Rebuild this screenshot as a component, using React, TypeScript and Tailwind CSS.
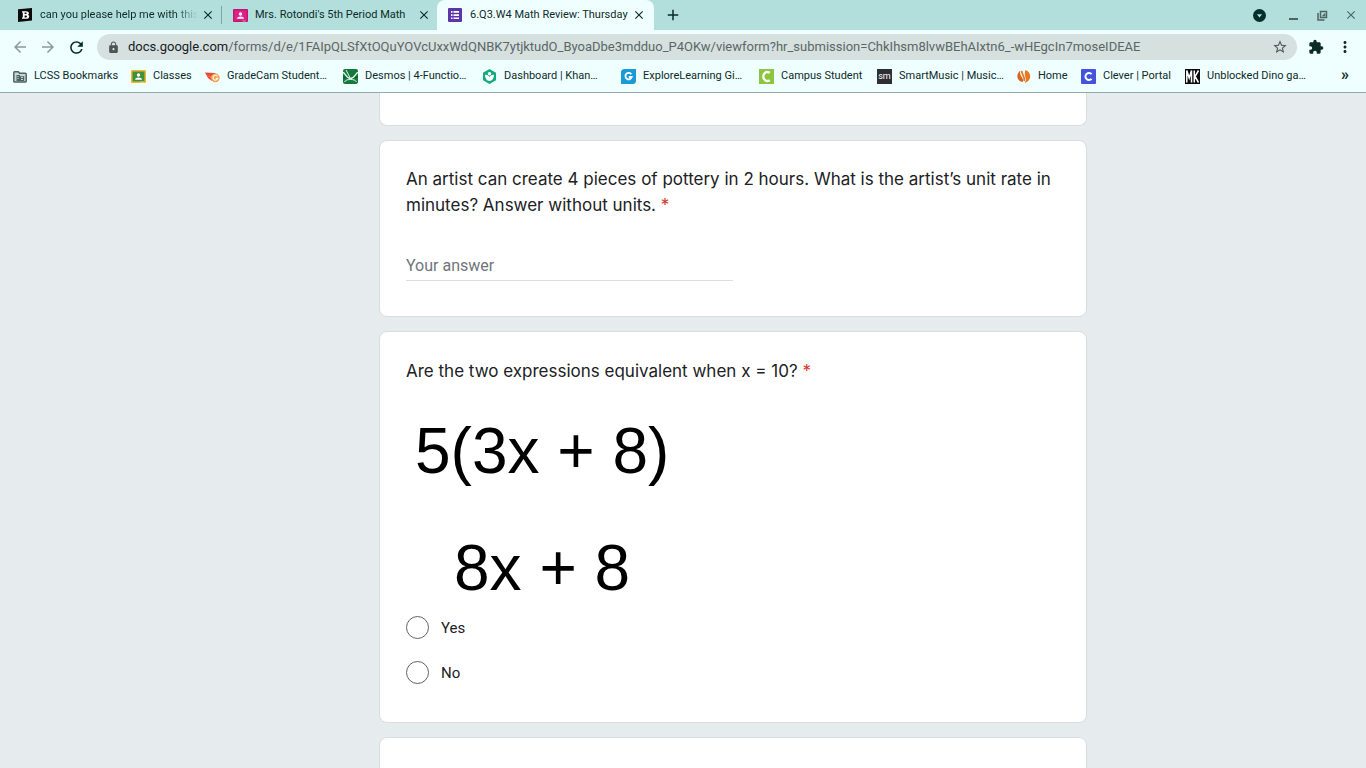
import React, { useState } from 'react';
import {
  MdAdd,
  MdArrowBack,
  MdArrowForward,
  MdClose,
  MdExtension,
  MdLock,
  MdMoreVert,
  MdRefresh,
  MdStarBorder,
} from 'react-icons/md';

interface Tab {
  title: string;
  icon: React.ReactNode;
  active?: boolean;
  divider?: boolean;
}

interface Bookmark {
  label: string;
  icon: React.ReactNode;
  width: string;
}

const BrainlyIcon = () => (
  <svg viewBox="0 0 14 14" className="h-[14px] w-[14px]">
    <path d="M0 1.2 14 0v12.6L0 14z" fill="#0a0a0a" />
    <path d="M4 3.2h4c2 0 2.9.8 2.9 2 0 .8-.4 1.3-1 1.6.9.3 1.3.9 1.3 1.7 0 1.4-1.1 2.3-3 2.3H4V9.5h.8v-5H4zm2.6 1.4v1.5H8c.9 0 .9-1.5 0-1.5zm0 2.8v2h1.5c1.1 0 1.1-2 0-2z" fill="#fff" />
  </svg>
);

const ClassroomIcon = ({ frame, board }: { frame: string; board: string }) => (
  <svg viewBox="0 0 15 13" className="h-[13px] w-[15px] shrink-0">
    <rect width="15" height="13" rx="1" fill={frame} />
    <rect x="1.5" y="1.5" width="12" height="10" fill={board} />
    <circle cx="7.5" cy="5" r="1.7" fill="#fff" />
    <path d="M4 9.8c0-1.6 2-2.3 3.5-2.3s3.5.7 3.5 2.3z" fill="#fff" />
    <path d="M9.5 11.5h3.3v1H9.5z" fill="#fff" opacity=".5" />
  </svg>
);

const FormsIcon = () => (
  <svg viewBox="0 0 14 14" className="h-[14px] w-[14px]">
    <rect width="14" height="14" rx="1" fill="#5e35a8" />
    <path d="M3 3h1.5v1.7H3zM3 6.2h1.5v1.7H3zM3 9.4h1.5v1.7H3zM5.5 3H11v1.7H5.5zM5.5 6.2H11v1.7H5.5zM5.5 9.4H11v1.7H5.5z" fill="#fff" />
  </svg>
);

const ManagedFolderIcon = () => (
  <svg viewBox="0 0 14 12" className="h-[12px] w-[14px]">
    <path d="M1.7.8h3.6l1.3 1.5h5.7c.5 0 .9.4.9.9v7c0 .5-.4.9-.9.9H1.7c-.5 0-.9-.4-.9-.9V1.7c0-.5.4-.9.9-.9z" fill="#c9d6d5" stroke="#4d6362" strokeWidth="1.5" />
    <path d="M3.5 4H7v1.2h4.2V10H3.5z" fill="#4d6362" />
    <path d="M4.5 5h.9v.9h-.9zM4.5 7h.9v.9h-.9zM8 6.2h2V7H8zM8 8.2h2V9H8z" fill="#efffff" />
  </svg>
);

const GradeCamIcon = () => (
  <svg viewBox="0 0 15 12" className="h-[12px] w-[15px]">
    <path d="M0 1.5 10 2l3 2.5L7 10 3 7z" fill="#e8483c" />
    <path d="M2 4.5 8 5v4z" fill="#f0703a" />
    <circle cx="10.3" cy="6.8" r="4.4" fill="#f2a052" />
    <path d="M12.5 5.4A2.4 2.4 0 1 0 12.7 7.4h-2" fill="none" stroke="#fff7e6" strokeWidth="1.2" />
  </svg>
);

const DesmosIcon = () => (
  <svg viewBox="0 0 15 15" className="h-[15px] w-[15px]">
    <rect width="15" height="15" rx="2" fill="#127a3d" />
    <path d="M0 8c3 0 4 1 7.5 1S12 8 15 8" fill="none" stroke="#0b5529" strokeWidth="1.2" />
    <path d="M0 3.5c2.500.5 3.500 6 7.500 6s5-5.500 7.500-6" fill="none" stroke="#e6f5ea" strokeWidth="1.3" />
    <path d="m3 1 4.500 8.500M1.500 13c1-2 3-2.500 6-2.500s5 .5 6 2.500" fill="none" stroke="#e6f5ea" />
  </svg>
);

const KhanIcon = () => (
  <svg viewBox="0 0 15 15" className="h-[15px] w-[15px]">
    <path d="M7.5 0 14 3.7v7.6L7.5 15 1 11.3V3.7z" fill="#14a97e" />
    <path d="M3 5.8c2.6 0 4.5 1.2 4.5 2.7 0-1.5 1.9-2.7 4.5-2.7 0 3.7-1.9 6.2-4.5 6.2S3 9.5 3 5.8z" fill="#fff" />
    <circle cx="7.5" cy="4.7" r="1.8" fill="#fff" />
  </svg>
);

const GizmosIcon = () => (
  <svg viewBox="0 0 15 15" className="h-[15px] w-[15px]">
    <path d="M3.5 0H15v11.5a3.5 3.5 0 0 1-3.5 3.5H0V3.5A3.5 3.5 0 0 1 3.5 0z" fill="#1a9bd7" />
    <path d="M10.3 5.3A3.2 3.2 0 1 0 10.7 8H7.8" fill="none" stroke="#fff" strokeWidth="1.8" />
  </svg>
);

const CampusIcon = () => (
  <svg viewBox="0 0 15 15" className="h-[15px] w-[15px]">
    <rect width="15" height="15" fill="#8cc63f" />
    <path d="M10.8 3.8C7.5 1.8 4.3 3.8 4.3 7.5s3.2 5.7 6.5 3.7" fill="none" stroke="#fff" strokeWidth="2.3" />
  </svg>
);

const SmartMusicIcon = () => (
  <span className="flex h-[15px] w-[15px] items-center justify-center bg-[#2e2e33] text-[9px] leading-none text-white">
    sm
  </span>
);

const HomeFlameIcon = () => (
  <svg viewBox="0 0 15 15" className="h-[15px] w-[15px]">
    <path d="M4.5 1.5C1 4 .2 8.5 3.2 11.5c1.3 1.3 2.8 1.5 3.8 1.2C8.5 9 2.5 7 4.5 1.5z" fill="#d9651c" />
    <path d="M6 2c-1 3.5 3.5 5.5 2.3 10" fill="none" stroke="#e07a2a" strokeWidth="1.8" />
    <path d="M9.5 1c4.5 1.5 6 6.5 3.5 10-1 1.5-2.5 2.5-4.5 2.7C12 10 7 7 9.5 1z" fill="#e8781e" />
  </svg>
);

const CleverIcon = () => (
  <svg viewBox="0 0 15 15" className="h-[15px] w-[15px]">
    <rect width="15" height="15" rx="1" fill="#4353dd" />
    <path d="M10.6 5.2A3.5 3.5 0 1 0 10.6 9.8" fill="none" stroke="#fff" strokeWidth="2" />
  </svg>
);

const DinoIcon = () => (
  <svg viewBox="0 0 15 15" className="h-[15px] w-[15px]">
    <rect width="15" height="15" fill="#0a0a0a" />
    <path d="M1.8 13.5v-12L4.2 9l2.3-7.5v12M9.3 1.5v12M13.5 1.5l-3.5 6 3.5 6" fill="none" stroke="#fff" strokeWidth="1.5" />
  </svg>
);

const tabs: Tab[] = [
  { title: 'can you please help me with this', icon: <BrainlyIcon />, divider: true },
  { title: "Mrs. Rotondi's 5th Period Math", icon: <ClassroomIcon frame="#c2186b" board="#e0208a" /> },
  { title: '6.Q3.W4 Math Review: Thursday', icon: <FormsIcon />, active: true },
];

const bookmarks: Bookmark[] = [
  { label: 'LCSS Bookmarks', icon: <ManagedFolderIcon />, width: 'w-[119px]' },
  { label: 'Classes', icon: <ClassroomIcon frame="#f0b92b" board="#3f9142" />, width: 'w-[74px]' },
  { label: 'GradeCam Student…', icon: <GradeCamIcon />, width: 'w-[138px]' },
  { label: 'Desmos | 4-Functio…', icon: <DesmosIcon />, width: 'w-[139px]' },
  { label: 'Dashboard | Khan…', icon: <KhanIcon />, width: 'w-[139px]' },
  { label: 'ExploreLearning Gi…', icon: <GizmosIcon />, width: 'w-[138px]' },
  { label: 'Campus Student', icon: <CampusIcon />, width: 'w-[118px]' },
  { label: 'SmartMusic | Music…', icon: <SmartMusicIcon />, width: 'w-[139px]' },
  { label: 'Home', icon: <HomeFlameIcon />, width: 'w-[65px]' },
  { label: 'Clever | Portal', icon: <CleverIcon />, width: 'w-[104px]' },
  { label: 'Unblocked Dino ga…', icon: <DinoIcon />, width: 'w-[139px]' },
];

const TabStrip = () => (
  <div className="flex h-[30px] shrink-0 items-stretch bg-[#b2dfdb] pl-[7px]">
    {tabs.map((tab) => (
      <div
        key={tab.title}
        className={`flex items-center pl-[11px] ${
          tab.active ? 'w-[217px] rounded-t-lg bg-[#efffff] pr-2' : 'w-[215px] pr-[6px]'
        }`}
      >
        <span className="flex w-[14px] justify-center">{tab.icon}</span>
        <button
          type="button"
          className={`ml-2 min-w-0 flex-1 overflow-hidden whitespace-nowrap text-left text-[11px] ${
            tab.divider ? 'mask-r-from-85%' : ''
          }`}
        >
          {tab.title}
        </button>
        <button type="button" aria-label="Close tab" className="ml-[3px] shrink-0">
          <MdClose className="h-[14px] w-[14px]" />
        </button>
        {tab.divider && <span className="-mr-[6px] ml-[6px] h-[18px] w-px bg-[#7fa5a2]" />}
      </div>
    ))}
    <button type="button" aria-label="New tab" className="ml-[10px] self-center">
      <MdAdd className="h-[18px] w-[18px]" />
    </button>
    <div className="ml-auto flex items-center gap-[15px] pr-2 text-[#4d6663]">
      <button type="button" aria-label="Search tabs" className="mr-[5px]">
        <svg viewBox="0 0 12 12" className="h-[13px] w-[13px]">
          <circle cx="6" cy="6" r="6" fill="#04302c" />
          <path d="M3.6 4.8h4.8L6 7.8z" fill="#b2dfdb" />
        </svg>
      </button>
      <button type="button" aria-label="Minimize">
        <svg viewBox="0 0 14 14" className="h-[14px] w-[14px]">
          <path d="M3 10h9v2H3z" fill="currentColor" />
        </svg>
      </button>
      <button type="button" aria-label="Restore">
        <svg viewBox="0 0 14 14" className="h-[14px] w-[14px]" fill="none" stroke="currentColor" strokeWidth="1.5">
          <path d="M5.5 3.5h6v6h-6zM3 5v7h6.5M9.5 5.5v2h-2" />
        </svg>
      </button>
      <button type="button" aria-label="Close window">
        <MdClose className="h-[14px] w-[14px]" />
      </button>
    </div>
  </div>
);

const Toolbar = () => (
  <div className="flex h-[34px] shrink-0 items-center pl-[11px] pr-3">
    <div className="flex items-center gap-[10px] text-[#8a9b9a]">
      <button type="button" aria-label="Back">
        <MdArrowBack className="h-[18px] w-[18px]" />
      </button>
      <button type="button" aria-label="Forward">
        <MdArrowForward className="h-[18px] w-[18px]" />
      </button>
      <button type="button" aria-label="Reload" className="text-[#04302c]">
        <MdRefresh className="h-[19px] w-[19px]" />
      </button>
    </div>
    <div className="ml-[11px] flex h-[26px] min-w-0 flex-1 items-center rounded-full bg-[#d5e0df] pl-[10px] pr-[9px]">
      <MdLock className="h-[13px] w-[13px] shrink-0 text-[#4a5655]" />
      <div className="ml-2 min-w-0 flex-1 overflow-hidden whitespace-nowrap text-[13px] text-[#5b6766]">
        <span className="text-[#16211f]">docs.google.com</span>
        /forms/d/e/1FAIpQLSfXtOQuYOVcUxxWdQNBK7ytjktudO_ByoaDbe3mdduo_P4OKw/viewform?hr_submission=ChkIhsm8lvwBEhAIxtn6_-wHEgcIn7moseIDEAE
      </div>
      <button type="button" aria-label="Bookmark this page" className="text-[#4a5655]">
        <MdStarBorder className="h-4 w-4" />
      </button>
    </div>
    <button type="button" aria-label="Extensions" className="ml-[11px]">
      <MdExtension className="h-4 w-4" />
    </button>
    <button type="button" aria-label="Menu" className="ml-3">
      <MdMoreVert className="h-[18px] w-[18px]" />
    </button>
  </div>
);

const BookmarksBar = () => (
  <nav className="flex h-[29px] shrink-0 items-center border-b border-[#93a9ac] pb-[3px] pl-3 pr-[17px] text-[11px]">
    {bookmarks.map((bookmark) => (
      <a key={bookmark.label} href="#" className={`flex shrink-0 items-center gap-[7px] whitespace-nowrap ${bookmark.width}`}>
        <span className="flex w-[15px] shrink-0 justify-center">{bookmark.icon}</span>
        {bookmark.label}
      </a>
    ))}
    <button type="button" aria-label="More bookmarks" className="ml-auto pb-1 text-[16px] font-bold leading-none">
      »
    </button>
  </nav>
);

const Card = ({ children, className = '' }: { children?: React.ReactNode; className?: string }) => (
  <section className={`rounded-lg border border-[#dadce0] bg-white px-[26px] ${className}`}>{children}</section>
);

const App: React.FC = () => {
  const [answer, setAnswer] = useState('');
  const [choice, setChoice] = useState('');

  return (
    <div className="flex h-screen flex-col overflow-hidden bg-[#e6ecee] font-['Roboto',sans-serif]">
      <header className="shrink-0 bg-[#efffff] text-[#0d2b29]">
        <TabStrip />
        <Toolbar />
        <BookmarksBar />
      </header>

      <main className="min-h-0 flex-1 overflow-hidden pl-[100px] text-[#202124]">
        <form className="mx-auto flex max-w-[708px] flex-col gap-[14px]">
          <Card className="h-[33px] rounded-t-none border-t-0" />

          {/* Short answer question */}
          <Card className="pb-[35px] pt-[25px]">
            <label htmlFor="unit-rate" className="block font-['Inter',sans-serif] text-[17px] leading-[26px]">
              An artist can create 4 pieces of pottery in 2 hours. What is the artist’s unit rate in minutes? Answer
              without units. <span className="text-[#d93025]">*</span>
            </label>
            <input
              id="unit-rate"
              type="text"
              value={answer}
              onChange={(e) => setAnswer(e.target.value)}
              placeholder="Your answer"
              className="mt-[33px] block h-[30px] w-1/2 border-b border-[#dcdfe1] text-[16px] outline-none placeholder:text-[#70757a]"
            />
          </Card>

          {/* Multiple choice question */}
          <Card className="pb-[38px] pt-[26px]">
            <fieldset>
              <legend className="font-['Inter',sans-serif] text-[17px] leading-[26px]">
                Are the two expressions equivalent when x = 10? <span className="text-[#d93025]">*</span>
              </legend>
              <div className="mt-5 flex flex-col gap-[23px] font-['Liberation_Sans',Arial,sans-serif] text-[64px] leading-[94px] text-black">
                <p className="pl-[9px]">5(3x + 8)</p>
                <p className="pl-12">8x + 8</p>
              </div>
              <div className="mt-px flex flex-col gap-[22px]">
                {['Yes', 'No'].map((option) => (
                  <label key={option} className="flex items-center gap-3 text-[15px] leading-[22px]">
                    <input
                      type="radio"
                      name="equivalent"
                      value={option}
                      checked={choice === option}
                      onChange={(e) => setChoice(e.target.value)}
                      className="h-[23px] w-[23px] appearance-none rounded-full border border-[#5f6368] checked:border-[7px] checked:border-[#673ab7]"
                    />
                    {option}
                  </label>
                ))}
              </div>
            </fieldset>
          </Card>

          <Card className="h-[120px]" />
        </form>
      </main>
    </div>
  );
};

export default App;
